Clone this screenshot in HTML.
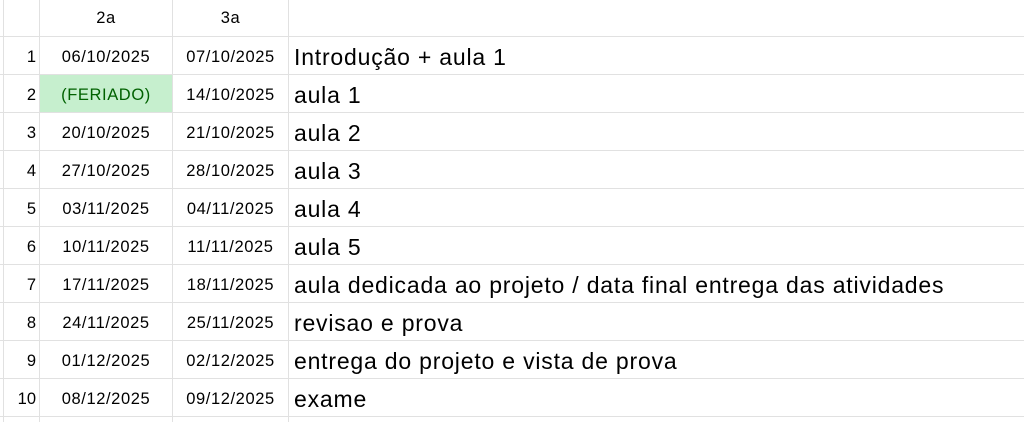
<!DOCTYPE html>
<html><head><meta charset="utf-8"><style>
body{margin:0;width:1024px;height:422px;background:#fff;position:relative;overflow:hidden;font-family:"Liberation Sans",Arial,sans-serif;color:#000}
.h{position:absolute;left:0;width:1024px;height:1px;background:#e1e1e1}
.v{position:absolute;top:0;height:422px;width:1px;background:#e1e1e1}
.c{position:absolute;height:38px;line-height:40px;font-size:16.5px;letter-spacing:0.6px;text-align:center}
.n{position:absolute;left:0;width:36px;text-align:right;height:38px;line-height:40px;font-size:16.5px}
.t{position:absolute;left:294px;height:38px;line-height:40px;font-size:23px;letter-spacing:0.8px;white-space:nowrap}
</style></head><body>
<div style="position:absolute;left:40px;top:75px;width:132px;height:37px;background:#c6efce"></div>
<div class="h" style="top:36px"></div><div class="h" style="top:74px"></div><div class="h" style="top:112px"></div><div class="h" style="top:150px"></div><div class="h" style="top:188px"></div><div class="h" style="top:226px"></div><div class="h" style="top:264px"></div><div class="h" style="top:302px"></div><div class="h" style="top:340px"></div><div class="h" style="top:378px"></div><div class="h" style="top:416px"></div>
<div class="v" style="left:3px"></div><div class="v" style="left:39px"></div><div class="v" style="left:172px"></div><div class="v" style="left:288px"></div>
<div class="c" style="left:40px;width:132px;top:-2px">2a</div>
<div class="c" style="left:173px;width:115px;top:-2px">3a</div>
<div class="n" style="top:37px">1</div><div class="c" style="left:40px;width:132px;top:37px">06/10/2025</div><div class="c" style="left:173px;width:115px;top:37px">07/10/2025</div><div class="t" style="top:37px">Introdução + aula 1</div>
<div class="n" style="top:75px">2</div><div class="c" style="left:40px;width:132px;top:75px;color:#006100">(FERIADO)</div><div class="c" style="left:173px;width:115px;top:75px">14/10/2025</div><div class="t" style="top:75px">aula 1</div>
<div class="n" style="top:113px">3</div><div class="c" style="left:40px;width:132px;top:113px">20/10/2025</div><div class="c" style="left:173px;width:115px;top:113px">21/10/2025</div><div class="t" style="top:113px">aula 2</div>
<div class="n" style="top:151px">4</div><div class="c" style="left:40px;width:132px;top:151px">27/10/2025</div><div class="c" style="left:173px;width:115px;top:151px">28/10/2025</div><div class="t" style="top:151px">aula 3</div>
<div class="n" style="top:189px">5</div><div class="c" style="left:40px;width:132px;top:189px">03/11/2025</div><div class="c" style="left:173px;width:115px;top:189px">04/11/2025</div><div class="t" style="top:189px">aula 4</div>
<div class="n" style="top:227px">6</div><div class="c" style="left:40px;width:132px;top:227px">10/11/2025</div><div class="c" style="left:173px;width:115px;top:227px">11/11/2025</div><div class="t" style="top:227px">aula 5</div>
<div class="n" style="top:265px">7</div><div class="c" style="left:40px;width:132px;top:265px">17/11/2025</div><div class="c" style="left:173px;width:115px;top:265px">18/11/2025</div><div class="t" style="top:265px">aula dedicada ao projeto / data final entrega das atividades</div>
<div class="n" style="top:303px">8</div><div class="c" style="left:40px;width:132px;top:303px">24/11/2025</div><div class="c" style="left:173px;width:115px;top:303px">25/11/2025</div><div class="t" style="top:303px">revisao e prova</div>
<div class="n" style="top:341px">9</div><div class="c" style="left:40px;width:132px;top:341px">01/12/2025</div><div class="c" style="left:173px;width:115px;top:341px">02/12/2025</div><div class="t" style="top:341px">entrega do projeto e vista de prova</div>
<div class="n" style="top:379px">10</div><div class="c" style="left:40px;width:132px;top:379px">08/12/2025</div><div class="c" style="left:173px;width:115px;top:379px">09/12/2025</div><div class="t" style="top:379px">exame</div>
</body></html>
